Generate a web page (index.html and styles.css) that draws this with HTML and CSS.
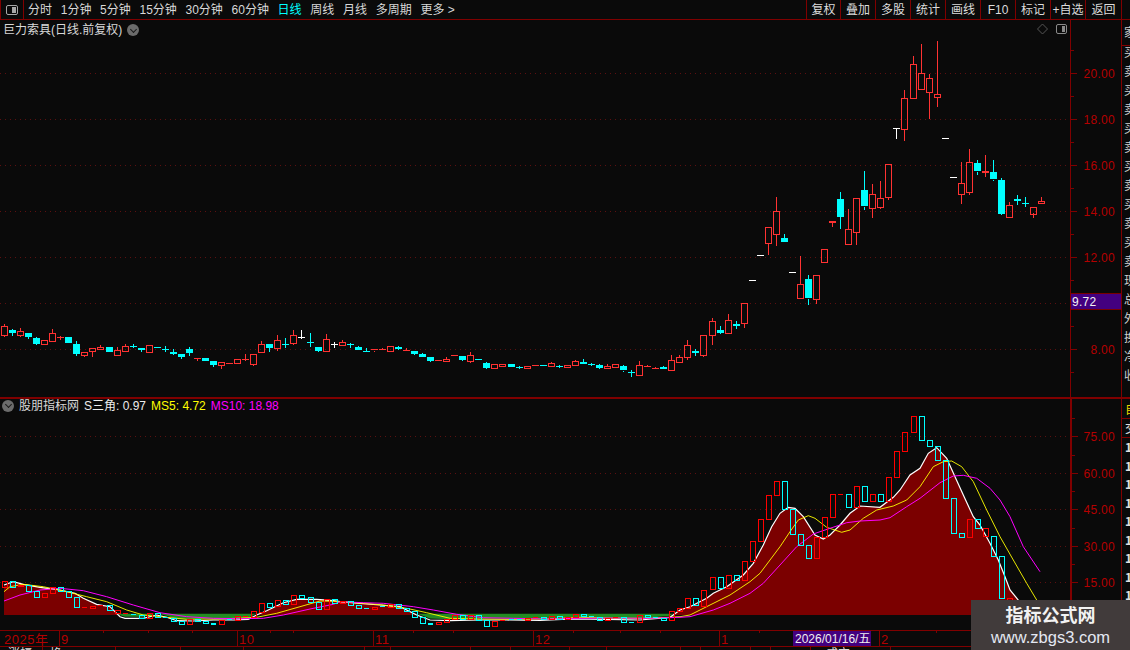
FILE: index.html
```html
<!DOCTYPE html>
<html lang="zh-CN">
<head>
<meta charset="utf-8">
<title>巨力索具</title>
<link rel="stylesheet" href="styles.css">
</head>
<body>
<div class="app">
  <header class="topbar">
    <div class="layout-btn"><span class="panel-glyph"></span></div>
    <nav class="periods">
      <span>分时</span><span>1分钟</span><span>5分钟</span><span>15分钟</span><span>30分钟</span><span>60分钟</span>
      <span class="active">日线</span><span>周线</span><span>月线</span><span>多周期</span><span>更多 &gt;</span>
    </nav>
    <div class="tools">
      <span>复权</span><span>叠加</span><span>多股</span><span>统计</span><span>画线</span><span>F10</span><span>标记</span><span class="tool-wide">+自选</span><span class="tool-last">返回</span>
    </div>
  </header>
  <div class="workspace">
    <div class="charts">
      <section class="panel panel-main">
        <svg id="mainPlot" class="plot" viewBox="0 20 1070 377" width="1070" height="377"></svg>
        <svg id="mainAxis" class="axis" viewBox="1070 20 51 377" width="51" height="377"></svg>
        <div class="title-main">巨力索具(日线.前复权)<span class="chev"></span></div>
        <div class="corner-icons">
          <svg width="30" height="12" viewBox="0 0 30 12"><path class="diamond" d="M5.5 1 L10.5 6 L5.5 11 L0.5 6 Z"/><rect class="box" x="19.5" y="1.5" width="10" height="9" rx="1.5"/><rect class="box-fill" x="25" y="3" width="3" height="6"/></svg>
        </div>
        <div class="price-tag">9.72</div>
      </section>
      <section class="panel panel-sub">
        <svg id="subPlot" class="plot" viewBox="0 399 1070 231" width="1070" height="231"></svg>
        <svg id="subAxis" class="axis" viewBox="1070 399 51 231" width="51" height="231"></svg>
        <div class="title-sub"><span class="chev"></span><span>股朋指标网</span><span class="val-w">S三角: 0.97</span><span class="val-y">MS5: 4.72</span><span class="val-m">MS10: 18.98</span></div>
      </section>
      <svg id="timeAxis" class="timeaxis" viewBox="0 630 1121 20" width="1121" height="20"></svg>
    </div>
    <aside class="sidebar">
      <div class="side-top">
        <span>家</span>
        <span>买</span><span>卖</span><span>买</span><span>卖</span><span>买</span><span>卖</span><span>买</span><span>卖</span><span>买</span><span>卖</span><span>买</span><span>卖</span><span>现</span><span>总</span><span>外</span><span>换</span><span>净</span><span>收</span>
      </div>
      <div class="side-bottom">
        <span class="side-yellow">自</span><span class="side-box">交</span>
        <span>1</span><span>1</span><span>1</span><span>1</span><span>1</span><span>1</span><span>1</span><span>1</span><span>1</span><span>1</span><span>1</span>
      </div>
    </aside>
  </div>
  <div class="watermark"><strong>指标公式网</strong><span>www.zbgs3.com</span></div>
</div>
<script src="chart.js"></script>
</body>
</html>
```
FILE: styles.css
```css
* { box-sizing: border-box; }
html, body { margin: 0; height: 100%; background: #0a0a0a; overflow: hidden; }
body { font: 12px/1 "Liberation Sans", "Noto Sans CJK SC", sans-serif; color: #d8d8d8; }
.app { position: relative; width: 1130px; height: 650px; display: flex; flex-direction: column; overflow: hidden; }

.topbar { height: 20px; flex: none; display: flex; align-items: stretch; border-bottom: 1px solid #800000; }
.layout-btn { width: 24px; display: flex; align-items: center; justify-content: center; border-left: 1px solid #800000; border-right: 1px solid #800000; }
.panel-glyph { width: 12px; height: 10px; border: 1px solid #a8a8a8; border-radius: 2px; position: relative; }
.panel-glyph::after { content: ""; position: absolute; left: 5px; top: 1px; width: 4px; height: 6px; background: #a8a8a8; }
.periods { display: flex; align-items: center; gap: 8.7px; padding-left: 4px; flex: 1; }
.periods .active { color: #00ffff; }
.tools { display: flex; align-items: stretch; margin-right: 8px; }
.tools span { width: 35px; display: flex; align-items: center; justify-content: center; border-left: 1px solid #800000; color: #dcdcdc; }
.tools span:first-child { width: 34px; }
.tools .tool-last { width: 37px; border-right: 1px solid #800000; }

.workspace { flex: 1; display: flex; min-height: 0; }
.charts { width: 1121px; flex: none; display: flex; flex-direction: column; }
.panel { position: relative; display: flex; flex: none; }
.panel-main { height: 379px; border-bottom: 2px solid #800000; }
.panel-sub { height: 231px; }
.plot, .axis, .timeaxis { display: block; flex: none; }
.timeaxis { overflow: hidden; }

.title-main { position: absolute; left: 3px; top: 3px; display: flex; align-items: center; gap: 5px; color: #d8d8d8; height: 14px; }
.title-sub { position: absolute; left: 2px; top: -1px; height: 15px; display: flex; align-items: center; gap: 5px; color: #d8d8d8; }
.title-sub .chev { margin-right: 0; }
.val-w { color: #ececec; }
.val-y { color: #ffff00; }
.val-m { color: #ff00ff; }
.chev { width: 12px; height: 12px; border-radius: 50%; background: #6b6b6b; position: relative; display: inline-block; }
.chev::after { content: ""; position: absolute; left: 3.5px; top: 2.5px; width: 4px; height: 4px; border-right: 1.5px solid #1a1a1a; border-bottom: 1.5px solid #1a1a1a; transform: rotate(45deg); }
.corner-icons { position: absolute; left: 1037px; top: 3px; line-height: 0; }
.diamond { fill: none; stroke: #555; stroke-width: 1; }
.box { fill: none; stroke: #8a8a8a; stroke-width: 1; }
.box-fill { fill: #8a8a8a; }
.price-tag { position: absolute; left: 1071px; top: 273px; width: 50px; height: 17px; background: #43007f; color: #f4f4f4; border-top: 1px solid #7a0000; border-bottom: 1px solid #7a0000; padding-left: 1px; font-size: 12px; display: flex; align-items: center; letter-spacing: .3px; }

.sidebar { width: 9px; flex: none; border-left: 1px solid #800000; display: flex; flex-direction: column; overflow: hidden; font-family: "Noto Sans CJK SC", sans-serif; color: #cfcfcf; }
.side-top { height: 379px; flex: none; border-bottom: 2px solid #800000; display: flex; flex-direction: column; overflow: hidden; padding-top: 6px; }
.side-top span { height: 19px; flex: none; padding-left: 2px; white-space: nowrap; }
.side-top span:first-child { height: 20px; border-bottom: 1px solid #800000; }
.side-bottom { flex: 1; display: flex; flex-direction: column; overflow: hidden; }
.side-bottom span { height: 18.5px; flex: none; padding-left: 3px; font-size: 12px; font-weight: bold; color: #e0e0e0; display: flex; align-items: center; }
.side-bottom .side-yellow { color: #e6d800; height: 20px; border-bottom: 1px solid #800000; font-weight: normal; }
.side-bottom .side-box { height: 19px; font-weight: normal; border-bottom: 1px solid #800000; }

.watermark { position: absolute; left: 971px; top: 600px; width: 159px; height: 50px; background: #413b3b; display: flex; flex-direction: column; align-items: center; justify-content: center; gap: 2px; color: #f2f2f2; }
.watermark strong { font: bold 18px/1.2 "Noto Sans CJK SC", sans-serif; }
.watermark span { font: 16.5px/1.1 "Liberation Sans", sans-serif; color: #e4e8f2; }

svg text { font-family: "Liberation Sans", "Noto Sans CJK SC", sans-serif; font-size: 12px; }
.grid { stroke: #5c1010; stroke-width: 1; stroke-dasharray: 1 4; }
.axis-line { stroke: #800000; stroke-width: 1; shape-rendering: crispEdges; }
.axis-line-thick { stroke: #800000; stroke-width: 2; shape-rendering: crispEdges; }
.tick { stroke: #800000; stroke-width: 1; shape-rendering: crispEdges; }
.axis-text { fill: #b40000; letter-spacing: .3px; }
.time-text { fill: #b40000; font-size: 13px; letter-spacing: .5px; }
.date-tag { fill: #43007f; }
.date-text { fill: #f0f0f0; }
.foot-text { fill: #dcdcdc; }
.up { fill: none; stroke: #ff3232; stroke-width: 1; shape-rendering: crispEdges; }
.up-solid { fill: #ff3232; shape-rendering: crispEdges; }
.dn-solid { fill: #00ffff; shape-rendering: crispEdges; }
.wh-solid { fill: #ffffff; shape-rendering: crispEdges; }
.wick-r { stroke: #ff3232; stroke-width: 1; shape-rendering: crispEdges; }
.wick-c { stroke: #00ffff; stroke-width: 1; shape-rendering: crispEdges; }
.wick-w { stroke: #ffffff; stroke-width: 1; shape-rendering: crispEdges; }
.bar-r { fill: none; stroke: #ff0000; stroke-width: 1; shape-rendering: crispEdges; }
.bar-c { fill: none; stroke: #00ffff; stroke-width: 1; shape-rendering: crispEdges; }
.bar-rs { fill: #ff0000; shape-rendering: crispEdges; }
.bar-cs { fill: #00ffff; shape-rendering: crispEdges; }
.area-red { fill: #7b0000; }
.area-green { fill: #228b22; }
.line-w { fill: none; stroke: #ffffff; stroke-width: 1.2; }
.line-y { fill: none; stroke: #ffff00; stroke-width: .9; }
.line-m { fill: none; stroke: #ff00ff; stroke-width: 1; }
```
FILE: chart.js
```js
var NS = "http://www.w3.org/2000/svg";
function el(parent, tag, attrs, text) {
  var n = document.createElementNS(NS, tag);
  for (var k in attrs) n.setAttribute(k, attrs[k]);
  if (text !== undefined) n.textContent = text;
  parent.appendChild(n);
  return n;
}
function cx(i) { return Math.round(4 + 8.04 * i) + 0.5; }

var mainPlot = document.getElementById("mainPlot");
var mainAxis = document.getElementById("mainAxis");
var subPlot = document.getElementById("subPlot");
var subAxis = document.getElementById("subAxis");
var timeAxis = document.getElementById("timeAxis");

/* ---- main panel ---- */
[73, 119, 165, 211, 257, 303, 349].forEach(function (y) {
  el(mainPlot, "line", { "class": "grid", x1: 0, x2: 1070, y1: y + 0.5, y2: y + 0.5 });
});
el(mainAxis, "line", { "class": "axis-line", x1: 1070.5, x2: 1070.5, y1: 20, y2: 397 });
[["20.00", 73], ["18.00", 119], ["16.00", 165], ["14.00", 211], ["12.00", 257], ["8.00", 349]].forEach(function (p) {
  el(mainAxis, "text", { "class": "axis-text", x: 1115, y: p[1] + 5, "text-anchor": "end" }, p[0]);
});
[73, 119, 165, 211, 257, 303, 349].forEach(function (y) {
  el(mainAxis, "line", { "class": "tick", x1: 1071, x2: 1077, y1: y + 0.5, y2: y + 0.5 });
});
[50, 96, 142, 188, 234, 280, 326, 372].forEach(function (y) {
  el(mainAxis, "line", { "class": "tick", x1: 1071, x2: 1074, y1: y + 0.5, y2: y + 0.5 });
});

/* candles: hi, top, bottom, lo, kind; zoom-space y */
var seg1 = [
[42,48,74,80,"r"],[56,59,69,77,"c"],[54,64,77,80,"r"],[69,69,81,88,"c"],[80,84,101,105,"c"],[91,91,104,104,"r"],[57,70,93,95,"r"],[78,82,84,90,"R"],[81,81,98,100,"c"],[93,102,132,137,"c"],
[127,127,137,141,"r"],[115,115,124,141,"r"],[106,112,118,120,"r"],[111,111,125,125,"c"],[112,120,134,134,"r"],[102,109,125,125,"r"],[102,107,109,115,"c"],[114,114,120,126,"c"],[106,106,128,128,"r"],[112,112,116,116,"c"],
[107,116,118,125,"c"],[117,125,131,135,"c"],[132,132,141,147,"c"],[111,117,130,138,"c"],[145,145,147,153,"R"],[144,144,153,153,"c"],[153,153,165,171,"c"],[157,157,165,177,"r"],[159,159,161,161,"R"],[148,148,160,160,"r"],
[132,147,149,153,"R"],[133,133,163,167,"r"],[94,103,128,128,"r"],[103,103,114,127,"c"],[75,91,116,122,"r"],[84,103,106,115,"c"],[60,76,101,104,"r"],[60,80,82,88,"w"],[70,95,98,110,"c"],[111,111,122,125,"c"],
[72,88,124,124,"r"],[95,103,105,113,"w"],[90,97,106,106,"r"],[98,102,105,114,"c"],[108,111,119,119,"c"]
];
var seg2 = [
[114,123,125,125,"c"],[118,118,122,125,"R"],[114,117,121,121,"R"],[109,109,125,125,"r"],[108,111,116,120,"c"],[114,121,125,125,"R"],[123,123,131,135,"c"],[129,133,141,141,"c"],[141,141,153,156,"c"],[151,151,155,155,"R"],
[141,148,155,155,"r"],[136,136,140,140,"R"],[139,139,150,153,"c"],[126,136,155,159,"r"],[148,148,152,152,"c"],[155,160,174,178,"c"],[163,163,176,176,"r"],[163,163,170,170,"r"],[162,162,171,171,"c"],[168,171,173,177,"c"],
[169,169,176,176,"r"],[166,166,170,170,"R"],[166,166,170,170,"c"],[156,160,170,170,"r"],[165,169,171,174,"c"],[166,166,172,175,"r"],[150,154,167,167,"r"],[148,156,161,161,"c"],[159,162,164,168,"c"],[162,166,174,177,"c"],
[162,169,176,176,"r"],[163,163,173,173,"r"],[165,169,182,186,"c"],[181,185,187,201,"c"],[153,166,197,197,"r"],[165,169,173,173,"R"],[171,175,179,179,"R"],[168,172,179,179,"c"],[135,151,182,182,"r"],[135,142,158,158,"r"],
[90,106,143,150,"r"],[117,123,128,138,"c"],[76,76,137,141,"r"],[24,34,77,105,"r"]
];
var seg4 = [ /* idx 93.. */
[750,750,752,752,"w"],[675,675,677,677,"w"],[592,592,640,675,"r"],[502,544,613,647,"r"],[613,625,638,638,"c"],[726,726,728,728,"w"],[679,763,806,806,"r"],[736,748,806,824,"c"],[736,736,809,821,"r"],[658,658,697,697,"r"],
[573,573,578,590,"R"],[487,507,560,596,"c"],[537,598,643,643,"r"],[505,505,607,644,"r"],[423,481,530,539,"c"],[463,493,535,563,"r"],[454,505,532,537,"r"],[403,403,502,509,"r"],[295,295,297,326,"w"],[181,205,298,332,"r"],
[78,103,205,205,"r"],[42,130,178,178,"r"],[132,145,187,267,"r"],[33,193,202,231,"r"],[324,324,326,326,"w"],[441,441,443,443,"w"],[397,460,493,522,"r"],[357,397,487,495,"r"],[390,400,425,434,"c"],[375,423,428,440,"R"],
[390,427,449,453,"c"],[445,450,551,555,"c"],[517,526,562,562,"r"],[495,507,512,525,"c"],[501,519,522,531,"c"],[530,530,550,563,"r"],[502,514,520,520,"r"]
];

function drawCandle(i, hi, top, bot, lo, kind) {
  var x = cx(i);
  var wickClass = (kind === "r" || kind === "R") ? "wick-r" : (kind === "c" ? "wick-c" : "wick-w");
  if (hi < top) el(mainPlot, "line", { "class": wickClass, x1: x, x2: x, y1: hi, y2: top });
  if (lo > bot) el(mainPlot, "line", { "class": wickClass, x1: x, x2: x, y1: bot, y2: lo });
  if (kind === "r") {
    el(mainPlot, "rect", { "class": "up", x: x - 3, y: Math.round(top) + 0.5, width: 6, height: Math.max(1, Math.round(bot - top)) });
  } else {
    var cls = kind === "R" ? "up-solid" : (kind === "c" ? "dn-solid" : "wh-solid");
    el(mainPlot, "rect", { x: x - 3.5, y: Math.round(top), width: 7, height: Math.max(1, Math.round(bot - top)), "class": cls });
  }
}
seg1.forEach(function (c, i) {
  drawCandle(i, 310 + c[0] / 3, 310 + c[1] / 3, 310 + c[2] / 3, 310 + c[3] / 3, c[4]);
});
seg2.forEach(function (c, i) {
  drawCandle(i + 45, 310 + c[0] / 3, 310 + c[1] / 3, 310 + c[2] / 3, 310 + c[3] / 3, c[4]);
});
drawCandle(89, 326, 330, 333, 334, "c");
drawCandle(90, 314, 320, 333, 334, "r");
drawCandle(91, 321, 324, 326, 329, "c");
drawCandle(92, 303, 303, 323, 328, "r");
seg4.forEach(function (c, i) {
  drawCandle(i + 93, 30 + c[0] / 3, 30 + c[1] / 3, 30 + c[2] / 3, 30 + c[3] / 3, c[4]);
});

/* ---- sub panel ---- */
[436, 473, 509, 546, 582].forEach(function (y) {
  el(subPlot, "line", { "class": "grid", x1: 0, x2: 1070, y1: y + 0.5, y2: y + 0.5 });
  el(subAxis, "line", { "class": "tick", x1: 1071, x2: 1078, y1: y + 0.5, y2: y + 0.5 });
});
[418, 455, 491, 528, 564, 600].forEach(function (y) {
  el(subAxis, "line", { "class": "tick", x1: 1071, x2: 1075, y1: y + 0.5, y2: y + 0.5 });
});
el(subAxis, "line", { "class": "axis-line-thick", x1: 1071, x2: 1071, y1: 398, y2: 630 });
[["75.00", 436], ["60.00", 473], ["45.00", 509], ["30.00", 546], ["15.00", 582]].forEach(function (p) {
  el(subAxis, "text", { "class": "axis-text", x: 1115, y: p[1] + 5, "text-anchor": "end" }, p[0]);
});

var z7 = function (a) { return a.map(function (p) { return [p[0] / 3, 560 + p[1] / 3]; }); };
var z8 = function (a) { return a.map(function (p) { return [340 + p[0] / 3, 560 + p[1] / 3]; }); };
var z6 = function (a) { return a.map(function (p) { return [680 + p[0] / 3, 410 + p[1] / 3]; }); };

var white = z7([[12,75],[40,65],[70,73],[120,82],[180,90],[225,100],[250,115],[290,133],[330,140],[360,170],[375,175],[430,175],[470,165],[500,172],[530,182],[580,183],[640,180],[700,180],[745,178],[770,165],[800,152],[850,128],[890,118],[950,118],[1000,122]])
  .concat(z8([[0,125],[60,130],[120,135],[180,140],[230,165],[270,180],[330,182],[420,180],[500,180],[600,181],[700,177],[800,178],[900,180],[990,172]]))
  .concat(z6([[0,600],[30,590],[80,565],[100,550],[140,530],[190,495],[220,460],[250,405],[275,350],[300,310],[325,292],[345,295],[370,320],[405,375],[430,387],[450,375],[480,345],[510,310],[540,288],[600,292],[640,262],[660,240],[690,195],[720,175],[745,130],[770,113],[800,145],[825,200],[850,255],[880,320],[900,345],[930,400],[955,450],[975,500],[990,540],[1015,570],[1045,610]]));
var yellow = z7([[12,95],[30,80],[70,73],[130,80],[200,95],[260,110],[320,125],[380,150],[430,165],[500,172],[560,178],[640,177],[710,175],[770,172],[830,160],[900,140],[960,123],[1000,124]])
  .concat(z8([[0,125],[70,130],[130,135],[200,145],[260,158],[330,175],[420,177],[520,178],[620,177],[720,172],[820,175],[920,175]]))
  .concat(z6([[0,620],[30,615],[90,585],[150,555],[210,515],[240,490],[270,450],[300,410],[330,365],[355,330],[385,317],[405,325],[440,352],[485,367],[510,360],[550,325],[590,300],[640,288],[680,270],[720,230],[760,170],[790,155],[815,153],[845,170],[880,215],[920,300],[960,380],[1000,450],[1040,520],[1070,570],[1100,620]]));
var magenta = z7([[12,123],[60,105],[120,90],[180,85],[250,92],[320,110],[400,135],[480,158],[560,170],[640,175],[720,176],[790,175],[850,165],[930,147],[1000,133]])
  .concat(z8([[0,125],[70,128],[130,130],[220,140],[280,150],[350,163],[430,173],[520,175],[620,177],[720,175],[820,174],[920,175]]))
  .concat(z6([[0,622],[30,620],[100,600],[150,580],[210,550],[250,520],[300,465],[350,410],[400,372],[450,355],[500,338],[540,333],[600,330],[630,323],[680,290],[720,265],[780,218],[820,198],[850,196],[890,205],[930,235],[960,270],[990,320],[1030,410],[1080,485]]));

function ptsStr(a) { return a.map(function (p) { return p[0].toFixed(1) + "," + p[1].toFixed(1); }).join(" "); }

var BASE = 615;
var defs = el(subPlot, "defs", {});
var cpA = el(defs, "clipPath", { id: "aboveBase" });
el(cpA, "rect", { x: 0, y: 398, width: 1070, height: BASE - 398 });
var cpB = el(defs, "clipPath", { id: "belowBase" });
el(cpB, "rect", { x: 0, y: BASE - 1.5, width: 1070, height: 20 });

var first = white[0], last = white[white.length - 1];
var poly = first[0].toFixed(1) + "," + BASE + " " + ptsStr(white) + " " + last[0].toFixed(1) + "," + BASE;
/* the green band is lifted a little so it shows above the curves where they dip below zero */
var greenWrap = el(subPlot, "g", { "clip-path": "url(#belowBase)" });
el(greenWrap, "polygon", { "class": "area-green", points: poly, transform: "translate(0,-1.5)" });
el(subPlot, "polygon", { "class": "area-red", points: poly, "clip-path": "url(#aboveBase)" });
el(subPlot, "polyline", { "class": "line-w", points: ptsStr(white) });
el(subPlot, "polyline", { "class": "line-y", points: ptsStr(yellow) });
el(subPlot, "polyline", { "class": "line-m", points: ptsStr(magenta) });

/* bars: top, bottom, kind */
var b7 = [[64,82,"r"],[64,82,"c"],[76,80,"r"],[76,95,"c"],[94,112,"c"],[100,112,"r"],[82,100,"r"],[82,94,"c"],[94,112,"c"],[112,142,"c"],[142,146,"R"],[139,145,"r"],[136,140,"R"],[136,151,"c"],[151,160,"r"],[160,164,"R"],[163,167,"C"],[166,175,"c"],[160,175,"r"],[160,172,"c"],[172,175,"C"],[175,185,"c"],[184,194,"c"],[178,194,"r"],[178,185,"c"],[184,191,"c"],[189,194,"C"],[181,194,"r"],[178,181,"C"],[169,182,"r"],[168,171,"R"],[154,172,"r"],[130,157,"r"],[130,141,"c"],[121,139,"r"],[121,133,"c"],[106,133,"r"],[106,114,"c"],[112,128,"c"],[127,148,"c"],[118,148,"r"],[118,130,"c"]];
var b8 = [[124,130,"r"],[124,137,"c"],[136,146,"c"],[145,149,"C"],[142,149,"r"],[139,143,"C"],[133,142,"r"],[133,146,"c"],[145,155,"c"],[154,172,"c"],[172,190,"c"],[189,194,"C"],[187,194,"r"],[178,187,"r"],[166,178,"r"],[166,178,"c"],[166,178,"r"],[166,181,"c"],[181,199,"c"],[184,199,"r"],[180,184,"R"],[178,181,"C"],[178,181,"C"],[175,181,"r"],[172,175,"R"],[172,178,"c"],[169,178,"r"],[169,178,"c"],[172,178,"r"],[163,172,"r"],[163,169,"c"],[169,172,"C"],[172,181,"c"],[175,181,"r"],[172,175,"R"],[172,187,"c"],[185,187,"C"],[166,187,"r"],[166,172,"c"],[171,175,"C"],[175,181,"c"],[154,181,"r"],[145,154,"r"]];
var b6 = [[565,596,"r"],[565,586,"c"],[539,586,"r"],[502,539,"r"],[502,535,"c"],[496,535,"r"],[496,511,"c"],[454,511,"r"],[394,454,"r"],[328,394,"r"],[256,328,"r"],[214,256,"r"],[214,298,"c"],[298,373,"c"],[373,406,"c"],[406,445,"c"],[382,445,"r"],[322,382,"r"],[253,322,"r"],[252,254,"R"],[253,292,"c"],[229,292,"r"],[229,274,"c"],[253,274,"r"],[253,274,"c"],[202,274,"r"],[124,202,"r"],[67,124,"r"],[19,67,"r"],[19,91,"c"],[91,109,"c"],[109,151,"c"],[151,265,"c"],[265,370,"c"],[370,382,"c"],[328,382,"r"],[328,355,"c"],[355,379,"r"],[379,439,"c"],[439,565,"c"],[565,615,"r"]];

function drawBar(i, top, bot, kind) {
  var x = cx(i);
  if (kind === "r" || kind === "c") {
    el(subPlot, "rect", { "class": kind === "r" ? "bar-r" : "bar-c", x: x - 2.5, y: Math.round(top) + 0.5, width: 5, height: Math.max(1, Math.round(bot - top)) });
  } else {
    el(subPlot, "rect", { "class": kind === "R" ? "bar-rs" : "bar-cs", x: x - 2.5, y: Math.round(top), width: 5, height: Math.max(1, Math.round(bot - top)) });
  }
}
b7.forEach(function (b, i) { drawBar(i, 560 + b[0] / 3, 560 + b[1] / 3, b[2]); });
b8.forEach(function (b, i) { drawBar(i + 42, 560 + b[0] / 3, 560 + b[1] / 3, b[2]); });
b6.forEach(function (b, i) { drawBar(i + 85, 410 + b[0] / 3, 410 + b[1] / 3, b[2]); });

/* ---- time axis ---- */
el(timeAxis, "line", { "class": "axis-line", x1: 0, x2: 1121, y1: 630.5, y2: 630.5 });
el(timeAxis, "line", { "class": "axis-line", x1: 0, x2: 1121, y1: 646.5, y2: 646.5 });
[59, 237, 373, 533, 719, 879].forEach(function (x) {
  el(timeAxis, "line", { "class": "tick", x1: x + 0.5, x2: x + 0.5, y1: 631, y2: 646 });
});
[103, 148, 192, 270, 293, 413, 453, 573, 620, 660, 759, 840, 936].forEach(function (x) {
  el(timeAxis, "line", { "class": "tick", x1: x + 0.5, x2: x + 0.5, y1: 631, y2: 633 });
});
[42, 115, 180, 243, 364, 390, 470, 510, 569, 606, 680, 700, 750, 770, 810, 843, 890].forEach(function (x) {
  el(timeAxis, "line", { "class": "tick", x1: x + 0.5, x2: x + 0.5, y1: 647, y2: 650 });
});
[["2025年", 4], ["9", 61], ["10", 239], ["11", 375], ["12", 535], ["1", 721], ["2", 881]].forEach(function (p) {
  el(timeAxis, "text", { "class": "time-text", x: p[1], y: 644 }, p[0]);
});
el(timeAxis, "rect", { "class": "date-tag", x: 793, y: 631, width: 78, height: 15 });
el(timeAxis, "text", { "class": "date-text", x: 795, y: 643 }, "2026/01/16/五");
[["涨幅", 8], ["换", 50], ["成交", 826]].forEach(function (p) {
  el(timeAxis, "text", { "class": "foot-text", x: p[1], y: 658 }, p[0]);
});
```
